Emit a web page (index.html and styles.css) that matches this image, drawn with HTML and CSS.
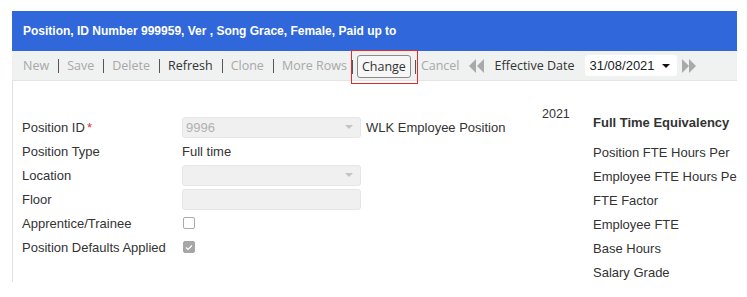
FILE: index.html
```html
<!DOCTYPE html>
<html lang="en">
<head>
    <meta charset="UTF-8">
    <title>Position</title>
    <link rel="stylesheet" href="styles.css">
</head>
<body>
    <div class="panel">
        <div class="title">Position, ID Number 999959, Ver , Song Grace, Female, Paid up to</div>

        <!-- toolbar -->
        <div class="toolbar">
            <span class="tool off">New</span>
            <span class="sep"></span>
            <span class="tool off">Save</span>
            <span class="sep"></span>
            <span class="tool off">Delete</span>
            <span class="sep"></span>
            <span class="tool">Refresh</span>
            <span class="sep"></span>
            <span class="tool off">Clone</span>
            <span class="sep"></span>
            <span class="tool off">More Rows</span>
            <span class="highlight">
                <span class="sep tight"></span>
                <button class="change-btn">Change</button>
                <span class="sep tight"></span>
            </span>
            <span class="tool off cancel">Cancel</span>
            <svg class="nav-icon" width="16" height="14" viewBox="0 0 16 14">
                <polygon points="8,0 1,7 8,14" fill="#a9a9a9"/>
                <polygon points="16,0 9,7 16,14" fill="#a9a9a9"/>
            </svg>
            <span class="tool eff-label">Effective Date</span>
            <div class="date-box">
                <span>31/08/2021</span>
                <span class="caret"></span>
            </div>
            <svg class="nav-icon" width="15" height="14" viewBox="0 0 15 14">
                <polygon points="0,0 7,7 0,14" fill="#a9a9a9"/>
                <polygon points="7,0 14,7 7,14" fill="#a9a9a9"/>
            </svg>
        </div>

        <!-- form body -->
        <div class="body">
            <div class="col-left">
                <div class="row">
                    <label>Position ID<span class="req">*</span></label>
                    <div class="field select"><span class="ph">9996</span><span class="arrow"></span></div>
                    <span class="after">WLK Employee Position</span>
                </div>
                <div class="row">
                    <label>Position Type</label>
                    <span class="value">Full time</span>
                </div>
                <div class="row">
                    <label>Location</label>
                    <div class="field select"><span class="arrow"></span></div>
                </div>
                <div class="row">
                    <label>Floor</label>
                    <div class="field"></div>
                </div>
                <div class="row">
                    <label>Apprentice/Trainee</label>
                    <span class="check"></span>
                </div>
                <div class="row">
                    <label>Position Defaults Applied</label>
                    <span class="check on">
                        <svg width="8" height="7" viewBox="0 0 8 7"><polyline points="1,3.5 3,5.5 7,1.5" fill="none" stroke="#fff" stroke-width="1.2"/></svg>
                    </span>
                </div>
            </div>
            <div class="year">2021</div>
            <div class="col-right">
                <div class="heading">Full Time Equivalency</div>
                <div class="row">Position FTE Hours Per</div>
                <div class="row">Employee FTE Hours Per</div>
                <div class="row">FTE Factor</div>
                <div class="row">Employee FTE</div>
                <div class="row">Base Hours</div>
                <div class="row">Salary Grade</div>
            </div>
        </div>
    </div>
</body>
</html>
```

FILE: styles.css
```css
body {
    margin: 0;
    padding: 11px 10px 0 12px;
    background: #ffffff;
    font-family: "Liberation Sans", Arial, sans-serif;
    color: #333;
}

.panel {
    width: 725px;
    overflow: hidden;
}

.title {
    height: 40px;
    line-height: 40px;
    background: #3068db;
    color: #ffffff;
    font-weight: bold;
    font-size: 12px;
    padding-left: 11px;
    white-space: nowrap;
}

.toolbar {
    display: flex;
    align-items: center;
    height: 29px;
    background: #f0f1f1;
    border-bottom: 1px solid #e4e4e4;
    padding-left: 11px;
    font-family: "Open Sans", sans-serif;
    font-size: 12.5px;
    white-space: nowrap;
}

.tool {
    color: #333;
}

.tool.off {
    color: #a8a8a8;
}

.sep {
    width: 1px;
    height: 14px;
    background: #555;
    margin: 0 8px 0 9px;
}

.sep.tight {
    margin: 0;
}

.highlight {
    display: flex;
    align-items: center;
    height: 34px;
    border: 1px solid #e32b2b;
    padding: 0 1px 0 0;
    gap: 4px;
    margin-left: 4px;
    margin-top: 2px;
    box-sizing: border-box;
}

.change-btn {
    font-family: "Open Sans", sans-serif;
    font-size: 12.5px;
    color: #333;
    background: #f7f7f7;
    border: 1px solid #8a8a8a;
    border-radius: 3px;
    height: 23px;
    padding: 0 4px;
}

.cancel {
    margin-left: 3px;
}

.nav-icon {
    margin-left: 8px;
}

.eff-label {
    margin-left: 11px;
}

.date-box {
    display: flex;
    align-items: center;
    justify-content: space-between;
    width: 92px;
    height: 21px;
    margin-left: 10px;
    padding: 0 7px 0 5px;
    box-sizing: border-box;
    background: #ffffff;
    border-radius: 3px;
    font-family: "Liberation Sans", Arial, sans-serif;
    font-size: 13px;
    color: #222;
}

.caret {
    width: 0;
    height: 0;
    border-left: 4px solid transparent;
    border-right: 4px solid transparent;
    border-top: 4px solid #111;
}

.date-box + .nav-icon {
    margin-left: 5px;
}

.body {
    display: flex;
    align-items: flex-start;
    height: 201px;
    border-left: 1px solid #e2e2e2;
    padding-left: 9px;
    font-size: 13px;
    white-space: nowrap;
}

.col-left {
    flex: 0 0 520px;
    padding-top: 34px;
}

.row {
    display: flex;
    align-items: center;
    height: 24px;
}

.row label {
    width: 160px;
}

.req {
    color: #e03030;
    margin-left: 2px;
}

.field {
    display: flex;
    align-items: center;
    justify-content: space-between;
    width: 179px;
    height: 21px;
    box-sizing: border-box;
    background: #f0f0f0;
    border: 1px solid #e6e6e6;
    border-radius: 3px;
    padding: 0 7px 0 3px;
}

.ph {
    color: #b0b0b0;
}

.arrow {
    margin-left: auto;
    width: 0;
    height: 0;
    border-left: 4px solid transparent;
    border-right: 4px solid transparent;
    border-top: 4px solid #c4c4c4;
}

.after {
    margin-left: 5px;
}

.check {
    display: flex;
    align-items: center;
    justify-content: center;
    width: 12px;
    height: 12px;
    box-sizing: border-box;
    border: 1px solid #aaa;
    border-radius: 2px;
    background: #fff;
    margin-left: 1px;
}

.check.on {
    background: #a6a6a6;
    border-color: #a6a6a6;
}

.year {
    flex: 0 0 51px;
    padding-top: 26px;
    font-size: 12.5px;
}

.col-right {
    min-width: 0;
    padding-top: 30px;
}

.heading {
    font-weight: bold;
    height: 24px;
    line-height: 24px;
    margin-bottom: 5px;
}
```
